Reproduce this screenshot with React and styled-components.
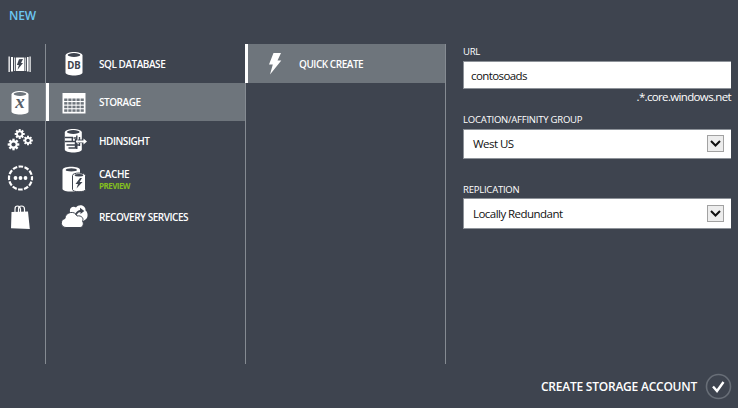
import React from "react";
import styled, { createGlobalStyle } from "styled-components";

const Global = createGlobalStyle`
  * { box-sizing: border-box; }
  body { margin: 0; background: #3e444f; overflow: hidden; }
`;
const Page = styled.main`
  width: 738px;
  height: 408px;
  display: flex;
  flex-direction: column;
  background: #3e444f;
  color: #fff;
  font-family: "Open Sans", "Noto Sans", sans-serif;
`;
const Header = styled.header`
  height: 44px;
  padding: 8px 0 0 9px;
`;
const Title = styled.h1`
  margin: 0;
  font-size: 12px;
  line-height: 16px;
  font-weight: 600;
  letter-spacing: -0.2px;
  color: #6cc7f2;
`;
const Body = styled.div`
  display: grid;
  grid-template-columns: 45px 200px 200px 293px;
  height: 320px;
`;
const Rail = styled.nav`
  display: grid;
  grid-template-rows: 39px 38px 38px 38px 39px;
  align-content: start;
`;
const RailItem = styled.button`
  border: 0;
  padding: 0 6px 0 0;
  width: 45px;
  display: grid;
  place-items: center;
  background: ${(p) => (p.$active ? "#6e757c" : "transparent")};
`;
const Column = styled.section`
  border-left: 1px solid #858b92;
  display: grid;
  grid-template-rows: 39px 38px 39px 37px 39px;
  align-content: start;
`;
const Item = styled.button`
  border: 0;
  margin: 0 0 0 ${(p) => (p.$overlap ? "-1px" : "0")};
  padding: 0;
  display: grid;
  grid-template-columns: ${(p) => (p.$overlap ? "54px" : "53px")} 1fr;
  align-items: center;
  text-align: left;
  color: #fff;
  font: 600 10px/14px "Open Sans", "Noto Sans", sans-serif;
  background: ${(p) => (p.$active ? "#6e757c" : "transparent")};
  box-shadow: ${(p) => (p.$active ? "inset 3px 0 #fff" : "none")};
`;
const IconSlot = styled.span`
  display: flex;
  justify-content: center;
  padding: 1px 0 0 ${(p) => (p.$inset ? 13 : 2)}px;
`;
const Label = styled.span`
  white-space: nowrap;
  letter-spacing: -0.47px;
`;
const Preview = styled.small`
  display: block;
  font-size: 8px;
  line-height: 10px;
  font-weight: 700;
  letter-spacing: -0.55px;
  color: #82bd20;
`;
const Form = styled.form`
  border-left: 1px solid #858b92;
  padding-left: 17px;
  width: 286px;
`;
const Field = styled.div`
  height: ${(p) => p.$height}px;
`;
const FieldLabel = styled.label`
  display: block;
  height: 17px;
  line-height: ${(p) => p.$line || 15}px;
  font-size: 9.5px;
  white-space: nowrap;
  letter-spacing: -0.22px;
`;
const Input = styled.input`
  display: block;
  width: 268px;
  height: 28px;
  padding: 0 7px;
  border: 1px solid #8d9299;
  border-width: 1px 0 1px 1px;
  border-radius: 0;
  outline: 0;
  background: #fff;
  color: #111;
  font: 11.5px "Open Sans", "Noto Sans", sans-serif;
  letter-spacing: -0.6px;
`;
const Suffix = styled.div`
  text-align: right;
  font-size: 11.5px;
  line-height: 15px;
  letter-spacing: -0.65px;
`;
const Select = styled.div`
  width: 268px;
  height: ${(p) => p.$height || 30}px;
  display: flex;
  align-items: center;
  justify-content: space-between;
  padding: 0 7px 1px 9px;
  background: #fff;
  border: 1px solid #8d9299;
  border-width: 1px 0 1px 1px;
  color: #111;
  font-size: 11.5px;
  letter-spacing: -0.54px;
`;
const Arrow = styled.span`
  width: 17px;
  height: 17px;
  display: grid;
  place-items: center;
  border: 1px solid #a2a2a2;
  background: #ededed;
`;
const Footer = styled.footer`
  height: 44px;
  display: flex;
  justify-content: flex-end;
  align-items: center;
  padding-right: 6px;
`;
const Create = styled.button`
  display: flex;
  align-items: center;
  gap: 8px;
  border: 0;
  padding: 0;
  background: none;
  color: #fff;
  font: 600 12px "Open Sans", "Noto Sans", sans-serif;
  letter-spacing: -0.23px;
`;

const BG = "#3e444f";
const Svg = ({ w = 26, h = 26, children }) => (
  <svg width={w} height={h} viewBox={`0 0 ${w} ${h}`} fill="#fff">{children}</svg>
);
const WebIcon = () => (
  <Svg>
    <path d="M1.500 5.500h1.300v15.500H1.500zM4 6h2v14.500H4zM7 6.500h.8v13.500H7zM8.800 6.500h8.600v13.500H8.800zM18.300 6.500h.8v13.500h-.8zM20 6h1.600v14.500H20zM22.500 5.500h1.200v15.500h-1.200z" />
    <path d="m12 8.200 4-.3-2 4.100h2L10.500 18.700l1.400-4.700h-2z" fill={BG} />
  </Svg>
);
const Drum = ({ lid }) => (
  <>
    <path d="M4.500 4.500C4.500-.3 21.500-.3 21.500 4.500v17c0 3.900-17 3.900-17 0z" />
    <ellipse cx="13" cy="4" rx="6.300" ry="1.900" fill={lid || BG} />
  </>
);
const StorageDrum = () => (
  <Svg>
    <g transform="translate(0 1)">
      <Drum lid="#6e757c" />
      <text x="13" y="17.500" textAnchor="middle" fontFamily="Liberation Serif, serif" fontStyle="italic" fontWeight="700" fontSize="19" fill="#596069">x</text>
    </g>
  </Svg>
);
const DbIcon = () => (
  <Svg>
    <Drum />
    <text x="13" y="18" textAnchor="middle" fontFamily="Noto Sans, sans-serif" fontWeight="700" fontSize="10.500" textLength="13.500" lengthAdjust="spacingAndGlyphs" fill={BG}>DB</text>
  </Svg>
);
const Gear = ({ x, y, r }) => (
  <g transform={`translate(${x} ${y}) scale(${r})`}>
    {[0, 45, 90, 135].map((a) => (
      <rect key={a} x="-.2" y="-1" width=".4" height="2" transform={`rotate(${a})`} />
    ))}
    <circle r=".72" />
    <circle r=".36" fill={BG} />
  </g>
);
const GearsIcon = () => (
  <Svg w={28}>
    <Gear x={13.700} y={7} r={5} />
    <Gear x={7.500} y={17.500} r={5.800} />
    <Gear x={22} y={13.500} r={4.800} />
  </Svg>
);
const NetworkIcon = () => (
  <Svg w={28}>
    <circle cx="14.500" cy="13" r="11.500" fill="none" stroke="#fff" strokeWidth="2.200" strokeDasharray="4.600 1.421" strokeDashoffset="2.300" />
    <circle cx="9.500" cy="13" r="1.900" />
    <circle cx="14.500" cy="13" r="1.900" />
    <circle cx="19.500" cy="13" r="1.900" />
  </Svg>
);
const BagIcon = () => (
  <Svg>
    <path d="m4.500 8 16.500-.5 1.800 17.500-18.800-.8z" />
    <path d="M8 9V5Q8 2 10.500 2T13.500 5v4M11.500 9V5Q11.500 2 14.500 2T17.500 5v4" fill="none" stroke="#fff" strokeWidth="1.200" />
  </Svg>
);
const TableIcon = () => (
  <Svg>
    <path d="M1.500 3h23v20.500h-23z" />
    {[0, 1, 2, 3].map((r) =>
      [0, 1, 2, 3, 4].map((c) => (
        <rect key={`${r}-${c}`} x={3.200 + c * 4.100} y={8.500 + r * 3.600} width="3.200" height="2.500" fill="#6e757c" />
      ))
    )}
  </Svg>
);
const HdIcon = () => (
  <Svg w={28}>
    <g transform="translate(.3 0)"><Drum /></g>
    <path d="M4.800 9.500h7.500v4M4.800 13.500h11M6.500 17h13M8.500 20h7v-9M16.800 7.500v13.500M13.500 10h3.500M19.500 9v9" stroke={BG} strokeWidth="1.400" fill="none" />
    <path d="M18 13.300h5" stroke={BG} strokeWidth="3.500" />
    <path d="M16 12.600h7.500v-2l3.500 2.900-3.500 2.900v-2H16z" />
  </Svg>
);
const CacheIcon = () => (
  <Svg>
    <path d="M1.500 4C1.500-.2 19-.2 19 4v19c0 3.400-17.500 3.400-17.500 0z" />
    <ellipse cx="10.300" cy="3.900" rx="5.600" ry="1.700" fill={BG} />
    <path d="M11.500 9.500c0-3.300 13-3.300 13 0v14c0 3-13 3-13 0z" stroke={BG} strokeWidth="1" />
    <ellipse cx="18" cy="9.200" rx="4.300" ry="1.200" fill={BG} />
    <path d="m19 12-4.500 6H17L15.500 22.500l6-6.500h-2.900L21 12z" fill={BG} />
  </Svg>
);
const CloudIcon = () => (
  <Svg w={28}>
    <path d="M10 8C9 4 13 1.500 16 3.500c3-4 10-2 9.500 3 3 2 2.500 8 0 9l-3 2-12-6z" />
    <path d="M6 23.500c-6 0-6-8-1-9 0-6.500 10-8.500 12-2.500 5-1 7 3 5.500 5 2 3 0 6.500-2.500 6.500z" stroke={BG} strokeWidth="1" />
    <path d="M15 10.500q1.500-4 5-4.500V3.800L24.300 7 20.500 10V8q-2.500.2-4 3z" fill={BG} />
  </Svg>
);
const Bolt = () => (
  <Svg>
    <path d="M7.500 2h7.500l-3.500 7.500h3.800L4 23.500l2.800-10H3z" />
  </Svg>
);
const Chevron = () => (
  <svg width="11" height="9" viewBox="0 0 11 9">
    <path d="m1 2 4.500 4.500L10 2" fill="none" stroke="#111" strokeWidth="2" />
  </svg>
);

const services = [
  { name: "SQL DATABASE", icon: DbIcon },
  { name: "STORAGE", icon: TableIcon, active: true },
  { name: "HDINSIGHT", icon: HdIcon },
  { name: "CACHE", icon: CacheIcon, preview: true },
  { name: "RECOVERY SERVICES", icon: CloudIcon },
];
const rail = [WebIcon, StorageDrum, GearsIcon, NetworkIcon, BagIcon];

export default function App() {
  return (
    <>
      <Global />
      <Page>
        <Header><Title>NEW</Title></Header>
        <Body>
          <Rail>
            {rail.map((Icon, i) => (
              <RailItem key={i} $active={i === 1}><Icon /></RailItem>
            ))}
          </Rail>
          <Column>
            {services.map(({ name, icon: Icon, active, preview }) => (
              <Item key={name} $active={active}>
                <IconSlot><Icon /></IconSlot>
                <Label>
                  {name}
                  {preview && <Preview>PREVIEW</Preview>}
                </Label>
              </Item>
            ))}
          </Column>
          <Column>
            <Item $active $overlap>
              <IconSlot $inset><Bolt /></IconSlot>
              <Label>QUICK CREATE</Label>
            </Item>
          </Column>
          <Form onSubmit={(e) => e.preventDefault()}>
            <Field $height={68}>
              <FieldLabel htmlFor="url">URL</FieldLabel>
              <Input id="url" defaultValue="contosoads" />
              <Suffix>.*.core.windows.net</Suffix>
            </Field>
            <Field $height={69}>
              <FieldLabel>LOCATION/AFFINITY GROUP</FieldLabel>
              <Select>West US<Arrow><Chevron /></Arrow></Select>
            </Field>
            <Field $height={60}>
              <FieldLabel $line={17}>REPLICATION</FieldLabel>
              <Select $height={31}>Locally Redundant<Arrow><Chevron /></Arrow></Select>
            </Field>
          </Form>
        </Body>
        <Footer>
          <Create>
            CREATE STORAGE ACCOUNT
            <svg width="27" height="27" viewBox="0 0 27 27" fill="none">
              <circle cx="13.500" cy="13.500" r="12" stroke="#686e77" strokeWidth="1.600" />
              <path d="m8 13.500 4 4.500 6.500-9" stroke="#fff" strokeWidth="2.400" />
            </svg>
          </Create>
        </Footer>
      </Page>
    </>
  );
}
